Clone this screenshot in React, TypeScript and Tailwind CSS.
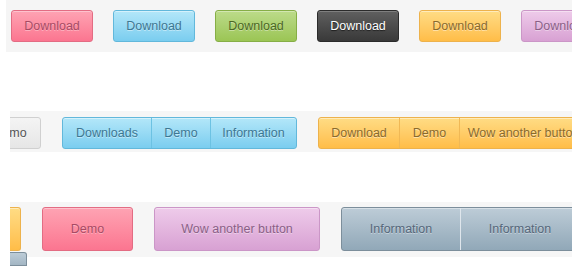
import React from "react";

const base =
  "shrink-0 flex items-center justify-center rounded-[3px] border text-[12.5px] leading-none";

const pink = "bg-linear-to-b from-[#fea3b3] to-[#fb7590] border-[#e36c83] text-[#a84a63] [text-shadow:0_1px_0_rgba(255,255,255,0.35)] shadow-[inset_0_1px_0_rgba(255,255,255,0.35)]";
const blue = "bg-linear-to-b from-[#b3e7f9] to-[#7acdef] border-[#62b8db] text-[#3d7792] [text-shadow:0_1px_0_rgba(255,255,255,0.45)] shadow-[inset_0_1px_0_rgba(255,255,255,0.45)]";
const green = "bg-linear-to-b from-[#bcdb89] to-[#9bc554] border-[#86ae46] text-[#4b6823] [text-shadow:0_1px_0_rgba(255,255,255,0.4)] shadow-[inset_0_1px_0_rgba(255,255,255,0.35)]";
const dark = "bg-linear-to-b from-[#606060] to-[#393939] border-[#2b2b2b] text-white [text-shadow:0_1px_1px_rgba(0,0,0,0.6)] shadow-[inset_0_1px_0_rgba(255,255,255,0.2)]";
const orange = "bg-linear-to-b from-[#ffdc84] to-[#ffbd47] border-[#edb24c] text-[#8a6a2c] [text-shadow:0_1px_0_rgba(255,255,255,0.45)] shadow-[inset_0_1px_0_rgba(255,255,255,0.45)]";
const purple = "bg-linear-to-b from-[#eecbea] to-[#d8a1d3] border-[#cb96c7] text-[#8a5f86] [text-shadow:0_1px_0_rgba(255,255,255,0.4)] shadow-[inset_0_1px_0_rgba(255,255,255,0.4)]";
const slate = "bg-linear-to-b from-[#bdccd7] to-[#91a8b8] border-[#7c8e9b] text-[#55677a] [text-shadow:0_1px_0_rgba(255,255,255,0.4)] shadow-[inset_0_1px_0_rgba(255,255,255,0.4)]";
const gray = "bg-linear-to-b from-[#f4f4f4] to-[#e6e6e6] border-[#d0d0d0] text-[#555555] [text-shadow:0_1px_0_rgba(255,255,255,0.6)]";

const font = { fontFamily: '"Liberation Sans", Arial, sans-serif' };

function Group({
  color,
  sep,
  items,
  h,
}: {
  color: string;
  sep: string;
  items: { label: string; w: number }[];
  h: string;
}) {
  return (
    <div className={`shrink-0 flex rounded-[3px] border ${h} ${color}`}>
      {items.map((it, i) => (
        <div
          key={i}
          style={{ width: it.w }}
          className={`flex items-center justify-center text-[12.5px] leading-none whitespace-nowrap ${
            i > 0 ? `border-l ${sep}` : ""
          }`}
        >
          {it.label}
        </div>
      ))}
    </div>
  );
}

export default function App() {
  return (
    <div className="w-[588px] h-[266px] bg-white overflow-hidden" style={font}>
      {/* Row 1 */}
      <div className="ml-[6px] w-[566px] h-[52px] bg-[#f5f5f5] overflow-hidden flex items-center gap-[20px] pl-[5px]">
        <div className={`${base} w-[82px] h-[32px] ${pink}`}>Download</div>
        <div className={`${base} w-[82px] h-[32px] ${blue}`}>Download</div>
        <div className={`${base} w-[82px] h-[32px] ${green}`}>Download</div>
        <div className={`${base} w-[82px] h-[32px] ${dark}`}>Download</div>
        <div className={`${base} w-[82px] h-[32px] ${orange}`}>Download</div>
        <div className={`${base} w-[82px] h-[32px] ${purple}`}>Download</div>
      </div>

      {/* Row 2 */}
      <div className="mt-[59px] ml-[10px] w-[562px] h-[41px] bg-[#f6f6f6] overflow-hidden flex items-start gap-[21px] pt-[6px]">
        <div className={`${base} w-[62px] h-[32px] ml-[-31px] ${gray}`}>Demo</div>
        <Group
          h="h-[32px]"
          color={blue}
          sep="border-[#6cc2e3]"
          items={[
            { label: "Downloads", w: 88 },
            { label: "Demo", w: 59 },
            { label: "Information", w: 86 },
          ]}
        />
        <Group
          h="h-[32px]"
          color={orange}
          sep="border-[#f0b855]"
          items={[
            { label: "Download", w: 80 },
            { label: "Demo", w: 60 },
            { label: "Wow another button", w: 128 },
          ]}
        />
      </div>

      {/* Row 3 */}
      <div className="mt-[50px] ml-[10px] w-[562px] h-[55px] bg-[#f6f6f6] overflow-x-clip flex items-start gap-[21px] pt-[5px]">
        <div className="shrink-0 flex flex-col w-[17px] overflow-x-clip">
          <div className={`w-[11px] h-[44px] rounded-r-[3px] border border-l-0 ${orange}`} />
          <div className="mt-[1px] w-[17px] h-[14px] rounded-tr-[3px] border border-l-0 border-[#7c8e9b] bg-linear-to-b from-[#bdccd7] to-[#a3b6c4]" />
        </div>
        <div className="shrink-0 ml-[-6px] flex gap-[21px]">
          <div className={`${base} w-[91px] h-[44px] ${pink}`}>Demo</div>
          <div className={`${base} w-[166px] h-[44px] ${purple}`}>Wow another button</div>
          <Group
            h="h-[44px]"
            color={slate}
            sep="border-[#dfe6ec]"
            items={[
              { label: "Information", w: 118 },
              { label: "Information", w: 119 },
            ]}
          />
        </div>
      </div>
    </div>
  );
}
